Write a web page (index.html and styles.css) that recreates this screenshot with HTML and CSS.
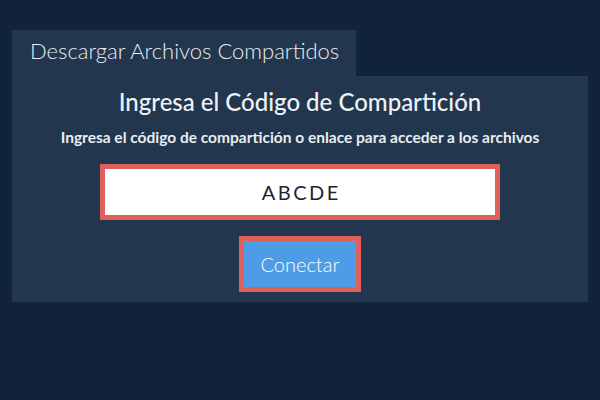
FILE: index.html
```html
<!DOCTYPE html>
<html lang="es">
<head>
<meta charset="utf-8">
<link rel="stylesheet" href="styles.css">
</head>
<body>
<div class="wrap">
  <div class="tab">Descargar Archivos Compartidos</div>
  <div class="panel">
    <h1 class="title">Ingresa el Código de Compartición</h1>
    <p class="subtitle">Ingresa el código de compartición o enlace para acceder a los archivos</p>
    <div class="code-input">ABCDE</div>
    <button class="connect">Conectar</button>
  </div>
</div>
</body>
</html>
```
FILE: styles.css
```css
html, body {
  margin: 0;
  padding: 0;
  background: #11233a;
  font-family: Lato, "Noto Sans", sans-serif;
  width: 600px;
  height: 400px;
  overflow: hidden;
}
.wrap {
  padding: 30px 12px 0 12px;
}
.tab {
  display: inline-block;
  box-sizing: border-box;
  height: 46px;
  width: 344px;
  padding-left: 18px;
  line-height: 42px;
  background: #22364d;
  color: #e8edf2;
  font-size: 22px;
  font-weight: 300;
  vertical-align: top;
}
.panel {
  background: #22364d;
  display: flex;
  flex-direction: column;
  align-items: center;
  padding: 11px 0 10px 0;
}
.title {
  margin: 0;
  font-size: 24px;
  line-height: 30px;
  font-weight: 500;
  color: #eef2f6;
}
.subtitle {
  margin: 10px 0 0 0;
  font-size: 15.5px;
  line-height: 20px;
  font-weight: 700;
  color: #e8edf2;
}
.code-input {
  margin-top: 17px;
  box-sizing: border-box;
  width: 400px;
  height: 56px;
  border: 5px solid #df605a;
  background: #ffffff;
  color: #1f2429;
  font-size: 20px;
  letter-spacing: 2.5px;
  text-indent: 2.5px;
  line-height: 46px;
  text-align: center;
  font-weight: 400;
}
.connect {
  margin-top: 16px;
  box-sizing: border-box;
  width: 122px;
  height: 56px;
  border: 5px solid #df605a;
  background: #4d9de6;
  color: #ffffff;
  font-family: Lato, "Noto Sans", sans-serif;
  font-size: 20px;
  font-weight: 300;
  padding: 0;
}
```
